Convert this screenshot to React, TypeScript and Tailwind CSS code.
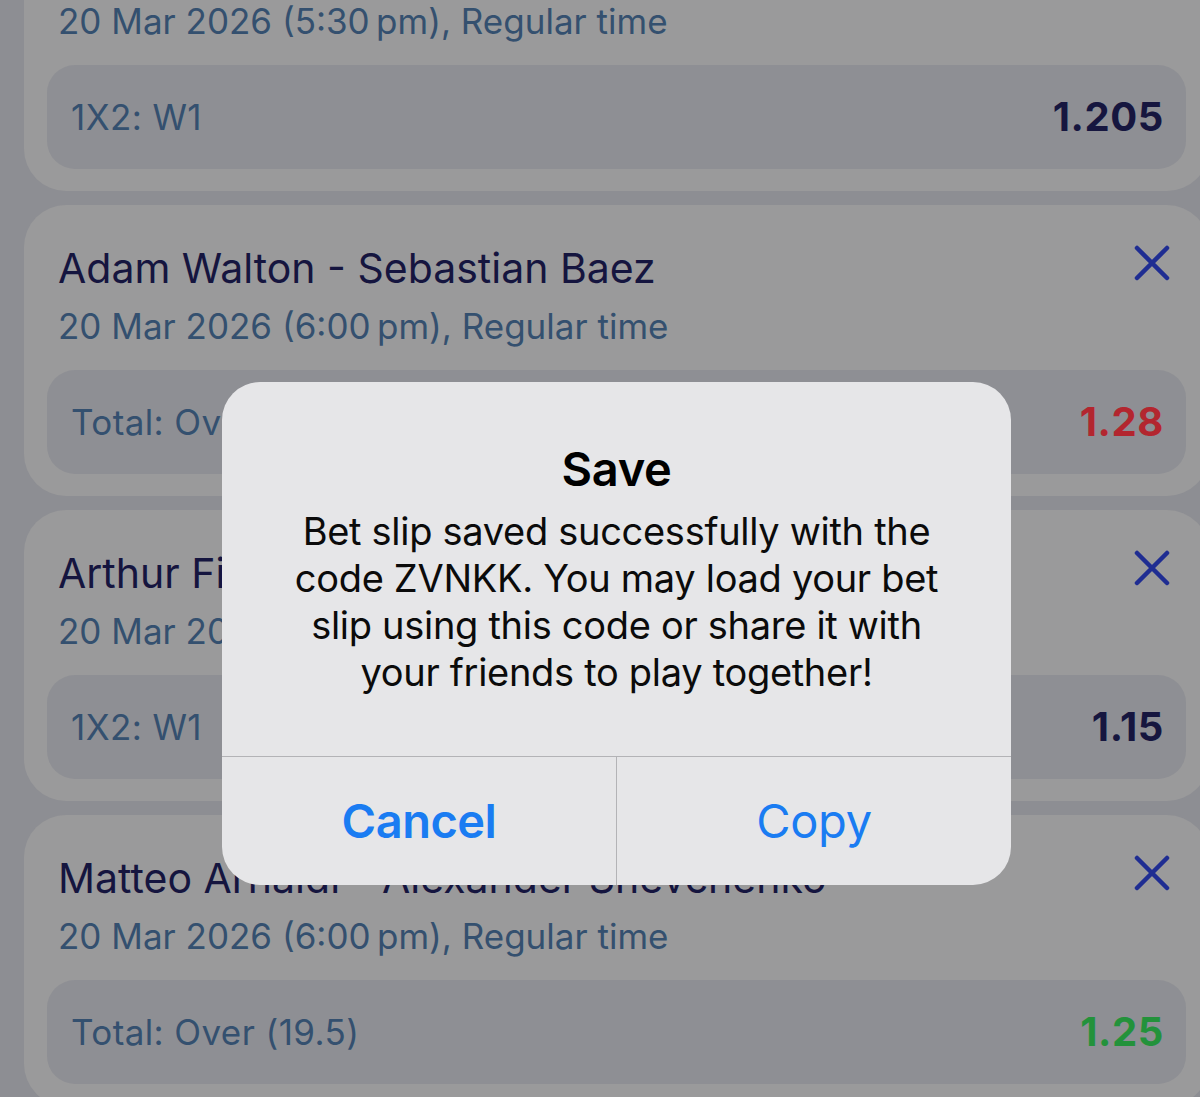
import React from "react";

type Bet = {
  title: string;
  date: string;
  market: string;
  odds: string;
  oddsColor: string;
};

const bets: Bet[] = [
  {
    title: "Jannik Sinner - Francisco Comesana",
    date: "20 Mar 2026 (5:30\u202Fpm), Regular time",
    market: "1X2: W1",
    odds: "1.205",
    oddsColor: "text-[#16163f]",
  },
  {
    title: "Adam Walton - Sebastian Baez",
    date: "20 Mar 2026 (6:00\u202Fpm), Regular time",
    market: "Total: Over (21.5)",
    odds: "1.28",
    oddsColor: "text-[#b3262f]",
  },
  {
    title: "Arthur Fils - Learner Tien",
    date: "20 Mar 2026 (6:00\u202Fpm), Regular time",
    market: "1X2: W1",
    odds: "1.15",
    oddsColor: "text-[#16163f]",
  },
  {
    title: "Matteo Arnaldi - Alexander Shevchenko",
    date: "20 Mar 2026 (6:00\u202Fpm), Regular time",
    market: "Total: Over (19.5)",
    odds: "1.25",
    oddsColor: "text-[#23923b]",
  },
];

function CloseIcon() {
  return (
    <svg width="36" height="36" viewBox="0 0 36 36" fill="none">
      <path
        d="M3 3 L33 33 M33 3 L3 33"
        stroke="#1f2d92"
        strokeWidth="4.5"
        strokeLinecap="round"
      />
    </svg>
  );
}

function BetCard({ bet }: { bet: Bet }) {
  return (
    <div className="w-[1185px] h-[291px] rounded-[42px] bg-[#9a9a9b] pt-[39px] pb-[22px] pl-[23px] pr-[23px] flex flex-col">
      <div className="flex items-center justify-between pl-[11px] pr-[14px] h-[48px]">
        <div className="text-[41px] leading-[48px] text-[#15153f] whitespace-nowrap">
          {bet.title}
        </div>
        <div className="-mt-[10px] mr-[2px]">
          <CloseIcon />
        </div>
      </div>
      <div className="pl-[11px] mt-[12px] h-[44px] text-[35px] leading-[44px] text-[#34506f] whitespace-nowrap">
        {bet.date}
      </div>
      <div className="mt-[22px] h-[104px] rounded-[28px] bg-[#8e8f94] flex items-center justify-between pl-[24px] pr-[22px]">
        <div className="text-[35px] text-[#34506f] tracking-[0.4px]">{bet.market}</div>
        <div className={`text-[40px] font-bold ${bet.oddsColor} tracking-[0.6px]`}>{bet.odds}</div>
      </div>
    </div>
  );
}

export default function App() {
  return (
    <div
      className="relative w-[1200px] h-[1097px] overflow-hidden bg-[#8d8e93]"
      style={{ fontFamily: "Inter, 'Noto Sans', sans-serif" }}
    >
      <div className="flex flex-col gap-[14px] pl-[24px] -mt-[100px]">
        {bets.map((b, i) => (
          <BetCard key={i} bet={b} />
        ))}
      </div>

      <div className="absolute left-[222px] top-[382px] w-[789px] h-[503px] rounded-[38px] bg-[#e6e6e8] flex flex-col overflow-hidden">
        <div className="flex-1 flex flex-col items-center pt-[59px] px-[30px]">
          <div className="text-[47px] leading-[56px] font-semibold text-black tracking-[-0.3px]">
            Save
          </div>
          <div className="mt-[11px] text-[38px] leading-[47px] text-center text-[#0b0b0b] tracking-[-0.3px] whitespace-nowrap">
            Bet slip saved successfully with the
            <br />
            code ZVNKK. You may load your bet
            <br />
            slip using this code or share it with
            <br />
            your friends to play together!
          </div>
        </div>
        <div className="h-[129px] border-t border-[#b3b3b6] flex">
          <div className="flex-1 flex items-center justify-center border-r border-[#b3b3b6] text-[47px] font-semibold text-[#1a7cf2] tracking-[-0.5px]">
            Cancel
          </div>
          <div className="flex-1 flex items-center justify-center text-[47px] text-[#1a7cf2] tracking-[-0.3px]">
            Copy
          </div>
        </div>
      </div>
    </div>
  );
}
